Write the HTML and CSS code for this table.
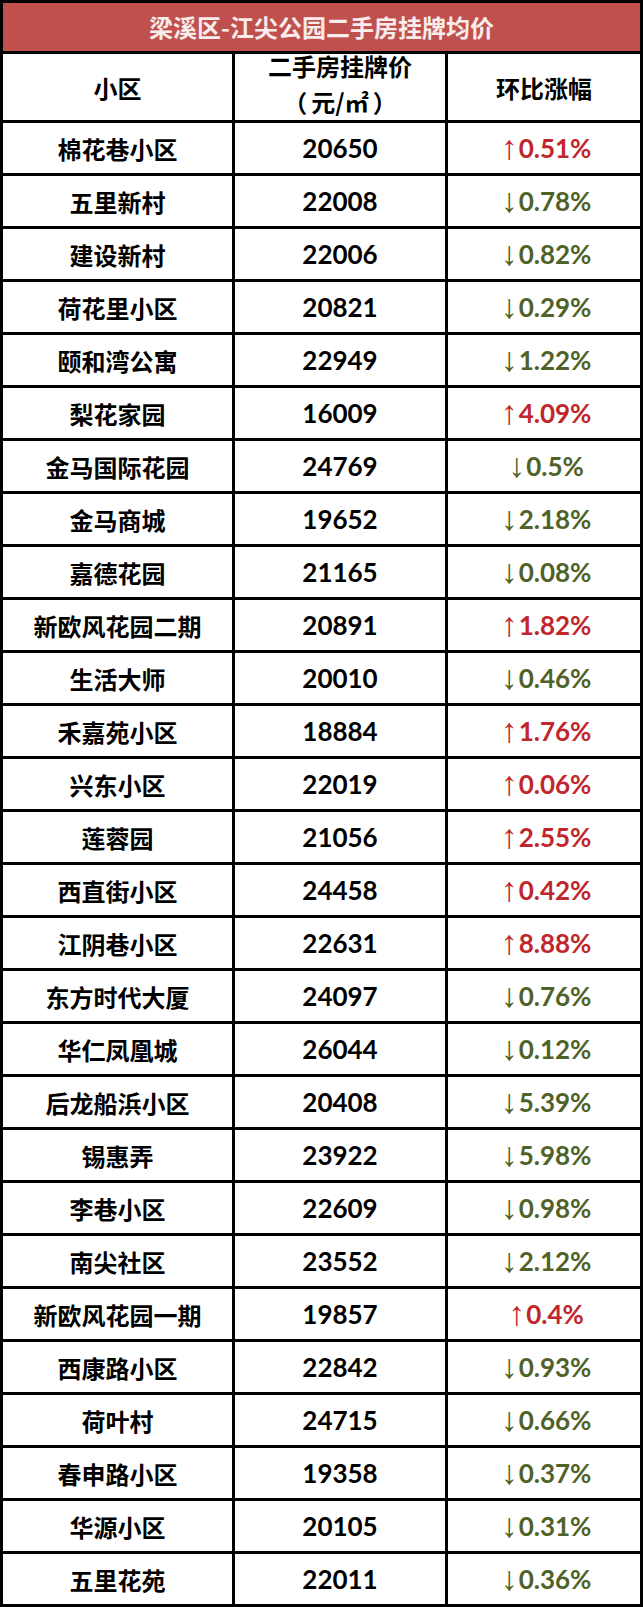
FILE: index.html
```html
<!DOCTYPE html>
<html lang="zh-CN">
<head>
<meta charset="utf-8">
<title>梁溪区-江尖公园二手房挂牌均价</title>
<link rel="stylesheet" href="styles.css">
</head>
<body>
<div class="sheet">
  <div class="title">梁溪区-江尖公园二手房挂牌均价</div>
  <div class="head">小区</div>
  <div class="head two"><span>二手房挂牌价</span><span class="unit"><span class="lp">（</span>元/㎡<span class="rp">）</span></span></div>
  <div class="head">环比涨幅</div>

  <div class="cell name">棉花巷小区</div><div class="cell num">20650</div><div class="cell pct up"><span class="arr">↑</span>0.51%</div>
  <div class="cell name">五里新村</div><div class="cell num">22008</div><div class="cell pct down"><span class="arr">↓</span>0.78%</div>
  <div class="cell name">建设新村</div><div class="cell num">22006</div><div class="cell pct down"><span class="arr">↓</span>0.82%</div>
  <div class="cell name">荷花里小区</div><div class="cell num">20821</div><div class="cell pct down"><span class="arr">↓</span>0.29%</div>
  <div class="cell name">颐和湾公寓</div><div class="cell num">22949</div><div class="cell pct down"><span class="arr">↓</span>1.22%</div>
  <div class="cell name">梨花家园</div><div class="cell num">16009</div><div class="cell pct up"><span class="arr">↑</span>4.09%</div>
  <div class="cell name">金马国际花园</div><div class="cell num">24769</div><div class="cell pct down"><span class="arr">↓</span>0.5%</div>
  <div class="cell name">金马商城</div><div class="cell num">19652</div><div class="cell pct down"><span class="arr">↓</span>2.18%</div>
  <div class="cell name">嘉德花园</div><div class="cell num">21165</div><div class="cell pct down"><span class="arr">↓</span>0.08%</div>
  <div class="cell name">新欧风花园二期</div><div class="cell num">20891</div><div class="cell pct up"><span class="arr">↑</span>1.82%</div>
  <div class="cell name">生活大师</div><div class="cell num">20010</div><div class="cell pct down"><span class="arr">↓</span>0.46%</div>
  <div class="cell name">禾嘉苑小区</div><div class="cell num">18884</div><div class="cell pct up"><span class="arr">↑</span>1.76%</div>
  <div class="cell name">兴东小区</div><div class="cell num">22019</div><div class="cell pct up"><span class="arr">↑</span>0.06%</div>
  <div class="cell name">莲蓉园</div><div class="cell num">21056</div><div class="cell pct up"><span class="arr">↑</span>2.55%</div>
  <div class="cell name">西直街小区</div><div class="cell num">24458</div><div class="cell pct up"><span class="arr">↑</span>0.42%</div>
  <div class="cell name">江阴巷小区</div><div class="cell num">22631</div><div class="cell pct up"><span class="arr">↑</span>8.88%</div>
  <div class="cell name">东方时代大厦</div><div class="cell num">24097</div><div class="cell pct down"><span class="arr">↓</span>0.76%</div>
  <div class="cell name">华仁凤凰城</div><div class="cell num">26044</div><div class="cell pct down"><span class="arr">↓</span>0.12%</div>
  <div class="cell name">后龙船浜小区</div><div class="cell num">20408</div><div class="cell pct down"><span class="arr">↓</span>5.39%</div>
  <div class="cell name">锡惠弄</div><div class="cell num">23922</div><div class="cell pct down"><span class="arr">↓</span>5.98%</div>
  <div class="cell name">李巷小区</div><div class="cell num">22609</div><div class="cell pct down"><span class="arr">↓</span>0.98%</div>
  <div class="cell name">南尖社区</div><div class="cell num">23552</div><div class="cell pct down"><span class="arr">↓</span>2.12%</div>
  <div class="cell name">新欧风花园一期</div><div class="cell num">19857</div><div class="cell pct up"><span class="arr">↑</span>0.4%</div>
  <div class="cell name">西康路小区</div><div class="cell num">22842</div><div class="cell pct down"><span class="arr">↓</span>0.93%</div>
  <div class="cell name">荷叶村</div><div class="cell num">24715</div><div class="cell pct down"><span class="arr">↓</span>0.66%</div>
  <div class="cell name">春申路小区</div><div class="cell num">19358</div><div class="cell pct down"><span class="arr">↓</span>0.37%</div>
  <div class="cell name">华源小区</div><div class="cell num">20105</div><div class="cell pct down"><span class="arr">↓</span>0.31%</div>
  <div class="cell name">五里花苑</div><div class="cell num">22011</div><div class="cell pct down"><span class="arr">↓</span>0.36%</div>
</div>
</body>
</html>
```

FILE: styles.css
```css
html, body {
  margin: 0;
  padding: 0;
  background: #ffffff;
}

.sheet {
  display: grid;
  grid-template-columns: 229px 210px 192px;
  grid-template-rows: 48px 66px;
  grid-auto-rows: 50px;
  gap: 3px;
  padding: 3px;
  width: fit-content;
  background: #000000;
  font-family: "Noto Sans CJK SC", "Noto Sans", sans-serif;
  font-weight: 700;
  font-size: 24px;
  color: #000000;
}

.title {
  grid-column: 1 / 4;
  background: #c0504d;
  color: #f8ecec;
  display: flex;
  align-items: center;
  justify-content: center;
  padding-bottom: 2px;
  box-sizing: border-box;
}

.head {
  background: #ffffff;
  display: flex;
  align-items: center;
  justify-content: center;
}

.head.two {
  flex-direction: column;
  line-height: 36px;
  padding-bottom: 6px;
  box-sizing: border-box;
}

.lp {
  margin-right: 4px;
}

.rp {
  margin-left: 4px;
}

.cell {
  background: #ffffff;
  display: flex;
  align-items: center;
  justify-content: center;
}

.num, .pct {
  font-family: Lato, "Liberation Sans", sans-serif;
  font-weight: 700;
  font-size: 26px;
}

.pct {
  padding-left: 4px;
}

.arr {
  font-family: "Liberation Sans", sans-serif;
  font-weight: 400;
  font-size: 34px;
  line-height: 1;
  margin-right: 1px;
  position: relative;
  top: -1px;
}

.up {
  color: #c0262c;
}

.down {
  color: #4f6228;
}
```
